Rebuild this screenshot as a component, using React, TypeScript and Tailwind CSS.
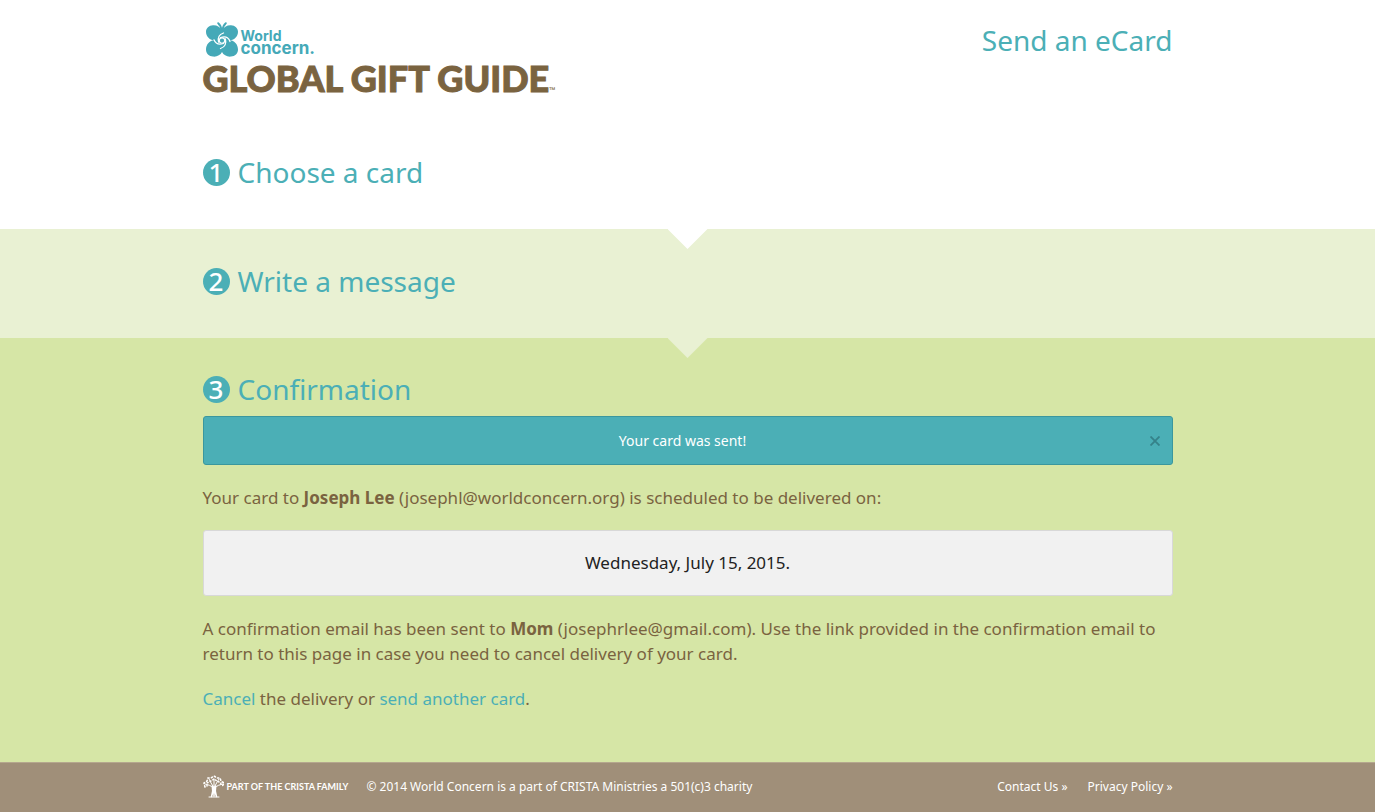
import { useState } from "react";
import type { ReactNode } from "react";

function Butterfly() {
  return (
    <svg viewBox="0 0 32 35" className="h-[35px] w-8 shrink-0" aria-hidden="true">
      <g fill="#45a9b8">
        <path d="M16 18.500V8.500C14.500 5 11 3 7 3.200C3 3.400 0 6 0 9.800C0 14.500 3.500 18.500 9.500 18.500Z" />
        <path d="M16 18.500V8.500C17.500 5 21 3 25 3.200C29 3.400 32 6 32 9.800C32 14.500 28.500 18.500 22.500 18.500Z" />
        <path d="M16 18V30C14.500 33 11 35 7 34.600C3 34.200 0 31.500 0 27.500C0 22.500 3.500 18 9.500 18Z" />
        <path d="M16 18V30C17.500 33 21 35 25 34.600C29 34.200 32 31.500 32 27.500C32 22.500 28.500 18 22.500 18Z" />
      </g>
      <g fill="none" stroke="#45a9b8" strokeWidth="1.900" strokeLinecap="round">
        <path d="M15.300 8C15.200 5 14 2.800 12.200 1.200" />
        <path d="M16.700 8C16.800 5 18 2.800 19.800 1.200" />
      </g>
      <g fill="none" stroke="#fff" strokeWidth="1.300" strokeLinecap="round">
        <path d="M12.600 20C11.500 15.500 13 12.500 17.500 11" />
        <path d="M14.600 15.500C19 14 22.500 15.500 24 19.500" />
        <path d="M19.400 17C20.500 21.500 19 25 14.500 26.500" />
        <path d="M17.400 21.500C13 23 9.500 21.500 8 17.800" />
      </g>
      <circle cx="16" cy="18.600" r="2.700" fill="none" stroke="#fff" strokeWidth="1.100" />
    </svg>
  );
}

function Tree() {
  return (
    <svg viewBox="0 0 22 23" className="h-[23px] w-[22px] shrink-0" aria-hidden="true">
      <g fill="none" stroke="#fff" strokeLinecap="round">
        <path strokeWidth="1.500" d="M9.300 11C10 14 10 18 8.500 21.500M12.700 11C12 14 12 18 13.500 21.500M11 12V21" />
        <path strokeWidth="1" d="M6 22H16M10 13C8 10 5 10 2 9M10.500 12C9 9 7 7 6 4M11 12V4M11.500 12C13 9 14 7 16 4M12 13C14 10 17 10 20 9" />
        <path strokeWidth="1.600" strokeDasharray="1.200 2.400" d="M2 12L1 8L4 6L5 3L8 3L11 1L14 3L17 3L18 6L21 8L19 12" />
        <path strokeWidth="1.500" strokeDasharray="1 2.200" d="M4 11L4 8L8 6L11 4L14 6L18 8L17 11" />
      </g>
    </svg>
  );
}

function StepTitle({ step, children }: { step: number; children: ReactNode }) {
  return (
    <h2 className="flex items-center gap-2 text-[28px] leading-10 text-[#4bafb6]">
      <span className="flex size-[27px] items-center justify-center rounded-full bg-[#4bafb6] text-[26px] leading-none font-medium text-white">
        {step}
      </span>
      {children}
    </h2>
  );
}

const container = "mx-auto w-full max-w-[970px]";

export default function App() {
  const [showAlert, setShowAlert] = useState(true);

  return (
    <div className="flex min-h-screen flex-col bg-[#d6e6a6] font-['Noto_Sans',sans-serif] text-[#7a6340]">
      <header className="bg-white pt-[22px]">
        <div className={`${container} flex items-start justify-between`}>
          <a href="#home" className="block">
            <span className="flex items-start gap-[3px] pl-[3px]">
              <Butterfly />
              <span className="flex flex-col pt-[7px] font-['Inter',sans-serif] font-bold text-[#45a9b8]">
                <span className="text-sm leading-[13px]">World</span>
                <span className="text-[17px] leading-[13px]">concern.</span>
              </span>
            </span>
            <span className="flex items-end">
              <span className="font-['Lato',sans-serif] text-[36px] leading-[42px] font-black whitespace-nowrap [-webkit-text-stroke:1px_#7a6340]">GLOBAL GIFT GUIDE</span>
              <span className="pb-1 text-[8px] leading-[10px] font-bold">™</span>
            </span>
          </a>
          <h1 className="text-[28px] leading-9 text-[#4bafb6]">Send an eCard</h1>
        </div>
      </header>

      <main className="flex grow flex-col">
        <section className="bg-white pt-[53px] pb-[37px]">
          <div className={container}>
            <StepTitle step={1}>Choose a card</StepTitle>
          </div>
        </section>

        <section className="relative bg-[#e9f1d3] pt-8 pb-[37px]">
          <span className="absolute top-0 left-1/2 h-5 w-10 -translate-x-1/2 bg-white [clip-path:polygon(0_0,100%_0,50%_100%)]" />
          <div className={container}>
            <StepTitle step={2}>Write a message</StepTitle>
          </div>
        </section>

        <section className="relative grow pt-[31px] pb-[51px]">
          <span className="absolute top-0 left-1/2 h-5 w-10 -translate-x-1/2 bg-[#e9f1d3] [clip-path:polygon(0_0,100%_0,50%_100%)]" />
          <div className={`${container} text-[17px] leading-[25px]`}>
            <StepTitle step={3}>Confirmation</StepTitle>
            {showAlert && (
              <div role="status" className="mt-[7px] flex items-center rounded-[3px] border border-[#3a979e] bg-[#4bafb6] px-3 py-3 text-sm leading-[23px] text-white">
                <p className="grow text-center">Your card was sent!</p>
                <button type="button" aria-label="Close" onClick={() => setShowAlert(false)} className="text-[#358289]">
                  <svg viewBox="0 0 10 10" className="size-[10px]" fill="none" stroke="currentColor" strokeWidth="1.800">
                    <path d="M0.500 0.500L9.500 9.500M9.500 0.500L0.500 9.500" />
                  </svg>
                </button>
              </div>
            )}
            <p className="mt-5">
              Your card to <strong>Joseph Lee</strong> (josephl@worldconcern.org) is scheduled to be delivered on:
            </p>
            <p className="mt-5 rounded-[3px] border border-[#d8d8d8] bg-[#f1f1f1] py-5 text-center leading-6 text-[#222222]">
              Wednesday, July 15, 2015.
            </p>
            <p className="mt-5">
              A confirmation email has been sent to <strong>Mom</strong> (josephrlee@gmail.com). Use the link provided in the confirmation email to return to this page in case you need to cancel delivery of your card.
            </p>
            <p className="mt-5">
              <a href="#cancel" className="text-[#4bafb6]">Cancel</a> the delivery or{" "}
              <a href="#send" className="text-[#4bafb6]">send another card</a>.
            </p>
          </div>
        </section>
      </main>

      <footer className="border-t border-[#b5a78e] bg-[#a08f79] pb-[2px] text-xs leading-[47px] text-white">
        <div className={`${container} flex items-center`}>
          <a href="#crista" className="flex items-center gap-[2px] font-['Lato',sans-serif] text-[9px] font-bold">
            <Tree />
            PART OF THE CRISTA FAMILY
          </a>
          <p className="ml-[18px] grow">© 2014 World Concern is a part of CRISTA Ministries a 501(c)3 charity</p>
          <nav className="flex gap-5">
            <a href="#contact">Contact Us »</a>
            <a href="#privacy">Privacy Policy »</a>
          </nav>
        </div>
      </footer>
    </div>
  );
}
